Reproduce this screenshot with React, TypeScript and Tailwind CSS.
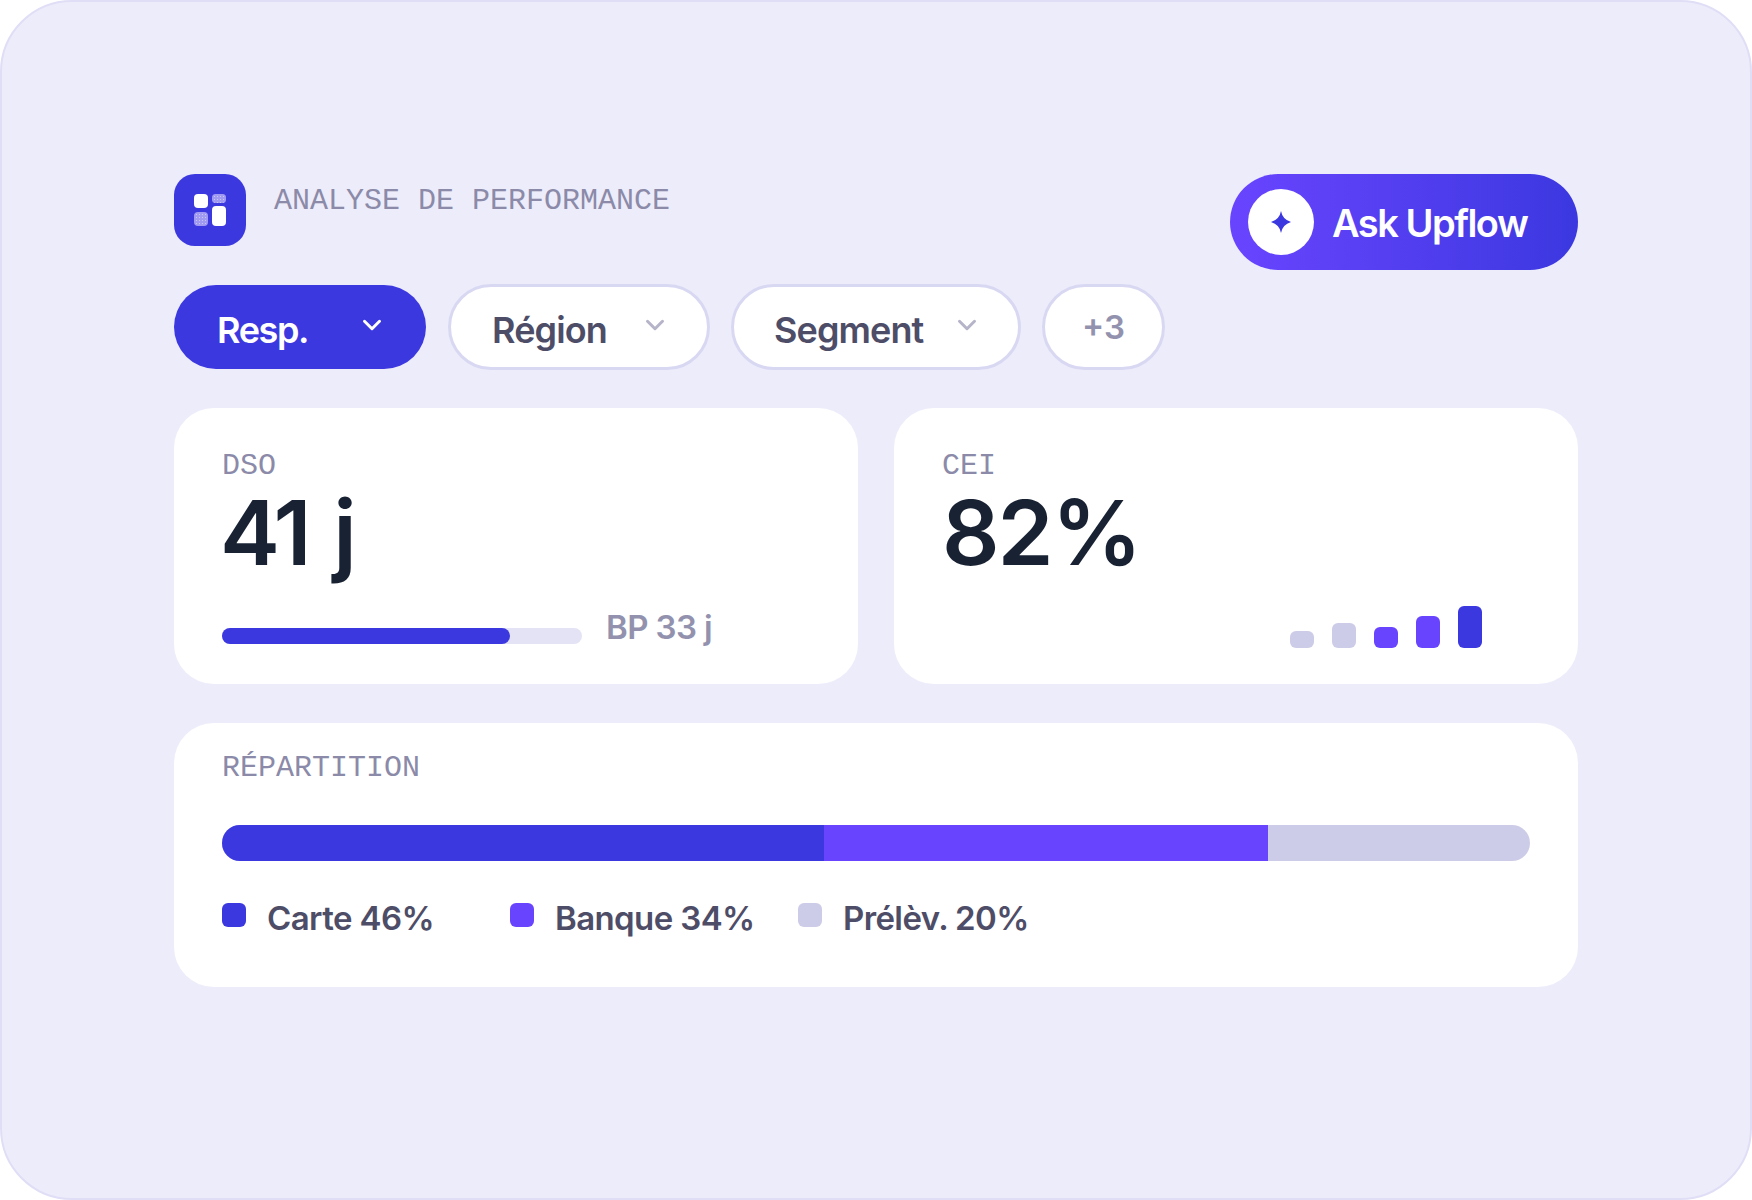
import { ChevronDown } from 'lucide-react'

const sans = "font-['Inter','Noto_Sans',sans-serif]"
const mono = "font-['Liberation_Mono',monospace]"

function Logo() {
  return (
    <div className="w-[72px] h-[72px] rounded-[21px] bg-[#3b38e0] shrink-0">
      <svg width="72" height="72" viewBox="0 0 72 72">
        <defs>
          <pattern id="dots" width="3" height="3" patternUnits="userSpaceOnUse">
            <rect width="3" height="3" fill="#a09af2" />
            <rect x="1" y="1" width="1" height="1" fill="#c9c6f9" />
          </pattern>
        </defs>
        <rect x="20" y="20" width="14" height="14" rx="4" fill="#fff" />
        <rect x="38" y="20" width="14" height="9" rx="3.5" fill="url(#dots)" />
        <rect x="20" y="38" width="14" height="14" rx="4" fill="url(#dots)" />
        <rect x="38" y="32" width="14" height="20" rx="4" fill="#fff" />
      </svg>
    </div>
  )
}

function Sparkle() {
  return (
    <svg width="20" height="22" viewBox="0 0 20 22" fill="#3b38e0">
      <path d="M10 0Q11.5 8.5 20 11Q11.5 13.5 10 22Q8.5 13.5 0 11Q8.5 8.5 10 0Z" />
    </svg>
  )
}

function Filter({ label, className }: { label: string; className: string }) {
  return (
    <div className={`h-[86px] flex items-center justify-between rounded-full bg-white border-[3px] border-[#d9d8f3] ${className}`}>
      <span className="mt-[5px] text-[36px] font-semibold text-[#4e4d68] tracking-[-0.9px]">{label}</span>
      <ChevronDown size={30} strokeWidth={2.4} className="text-[#b5b4c9] -mt-1" />
    </div>
  )
}

function Legend({ color, label }: { color: string; label: string }) {
  return (
    <div className="w-[288px] flex items-start gap-[21px]">
      <div className={`w-[24px] h-[24px] rounded-[6px] ${color}`} />
      <span className="-mt-[1px] text-[33px] leading-[32px] font-semibold text-[#4e4d68] tracking-[-0.6px]">{label}</span>
    </div>
  )
}

export default function App() {
  const bars = [
    { h: 'h-[17px]', c: 'bg-[#cdcce8]' },
    { h: 'h-[25px]', c: 'bg-[#cdcce8]' },
    { h: 'h-[21px]', c: 'bg-[#6944ff]' },
    { h: 'h-[32px]', c: 'bg-[#6944ff]' },
    { h: 'h-[42px]', c: 'bg-[#3b38e0]' },
  ]

  return (
    <div className={`w-[1752px] h-[1200px] bg-white ${sans}`}>
      <div className="h-full rounded-[72px] border-2 border-[#dfdef6] bg-[#edecfa] pt-[172px] px-[172px]">
        <div className="h-[96px] flex items-start justify-between">
          <div className="flex items-start gap-[28px]">
            <Logo />
            <span className={`${mono} mt-[3px] text-[30px] leading-[48px] text-[#8b8aa8]`}>ANALYSE DE PERFORMANCE</span>
          </div>
          <div className="w-[348px] h-[96px] rounded-full bg-gradient-to-r from-[#6944ff] to-[#3b38e0] flex items-center pl-[18px] gap-[18px]">
            <div className="w-[66px] h-[66px] rounded-full bg-white flex items-center justify-center">
              <Sparkle />
            </div>
            <span className="mt-[2px] text-[38px] font-semibold text-white tracking-[-1.5px]">Ask Upflow</span>
          </div>
        </div>

        <div className="mt-[14px] flex items-center gap-[21px]">
          <div className="w-[252px] h-[84px] mr-[1px] flex items-center justify-between rounded-full bg-[#3b38e0] pl-[43px] pr-[39px]">
            <span className="mt-[5px] text-[36px] font-semibold text-white tracking-[-1.4px]">Resp.</span>
            <ChevronDown size={30} strokeWidth={2.4} className="text-white -mt-1" />
          </div>
          <Filter label="Région" className="w-[262px] pl-[41px] pr-[37px]" />
          <Filter label="Segment" className="w-[290px] pl-[40px] pr-[36px]" />
          <div className="w-[123px] h-[86px] pt-[2px] flex items-center justify-center rounded-full bg-white border-[3px] border-[#d9d8f3] text-[33px] font-semibold text-[#9392ae]">
            +3
          </div>
        </div>

        <div className="mt-[38px] grid grid-cols-2 gap-[36px]">
          <div className="h-[276px] rounded-[40px] bg-white pt-[37px] pl-[48px] pr-[48px] flex flex-col">
            <span className={`${mono} text-[30px] leading-[42px] text-[#8b8aa8]`}>DSO</span>
            <span className="-ml-[2px] mt-[1px] text-[90px] leading-[90px] font-semibold text-[#182233] tracking-[-3.5px] [word-spacing:6px]">41 j</span>
            <div className="mt-[29px] flex items-start gap-[24px]">
              <div className="w-[360px] h-[16px] mt-[21px] rounded-full bg-[#e4e3f5]">
                <div className="w-[80%] h-full rounded-full bg-[#3b38e0]" />
              </div>
              <span className="text-[33px] leading-[40px] font-semibold text-[#9392ae] tracking-[-0.6px]">BP 33 j</span>
            </div>
          </div>

          <div className="h-[276px] rounded-[40px] bg-white pt-[37px] pl-[48px] pr-[96px] pb-[36px] flex flex-col">
            <span className={`${mono} text-[30px] leading-[42px] text-[#8b8aa8]`}>CEI</span>
            <span className="mt-[1px] text-[90px] leading-[90px] font-semibold text-[#182233] tracking-[-2px]">82%</span>
            <div className="mt-auto flex items-end justify-end gap-[18px]">
              {bars.map((b, i) => (
                <div key={i} className={`w-[24px] rounded-[6px] ${b.h} ${b.c}`} />
              ))}
            </div>
          </div>
        </div>

        <div className="mt-[39px] h-[264px] rounded-[40px] bg-white pt-[24px] px-[48px]">
          <div className={`${mono} text-[30px] leading-[42px] text-[#8b8aa8]`}>RÉPARTITION</div>
          <div className="mt-[36px] h-[36px] rounded-full overflow-hidden flex bg-[#cdcce8]">
            <div className="w-[46%] bg-[#3b38e0]" />
            <div className="w-[34%] bg-[#6944ff]" />
          </div>
          <div className="mt-[42px] flex">
            <Legend color="bg-[#3b38e0]" label="Carte 46%" />
            <Legend color="bg-[#6944ff]" label="Banque 34%" />
            <Legend color="bg-[#cdcce8]" label="Prélèv. 20%" />
          </div>
        </div>
      </div>
    </div>
  )
}
